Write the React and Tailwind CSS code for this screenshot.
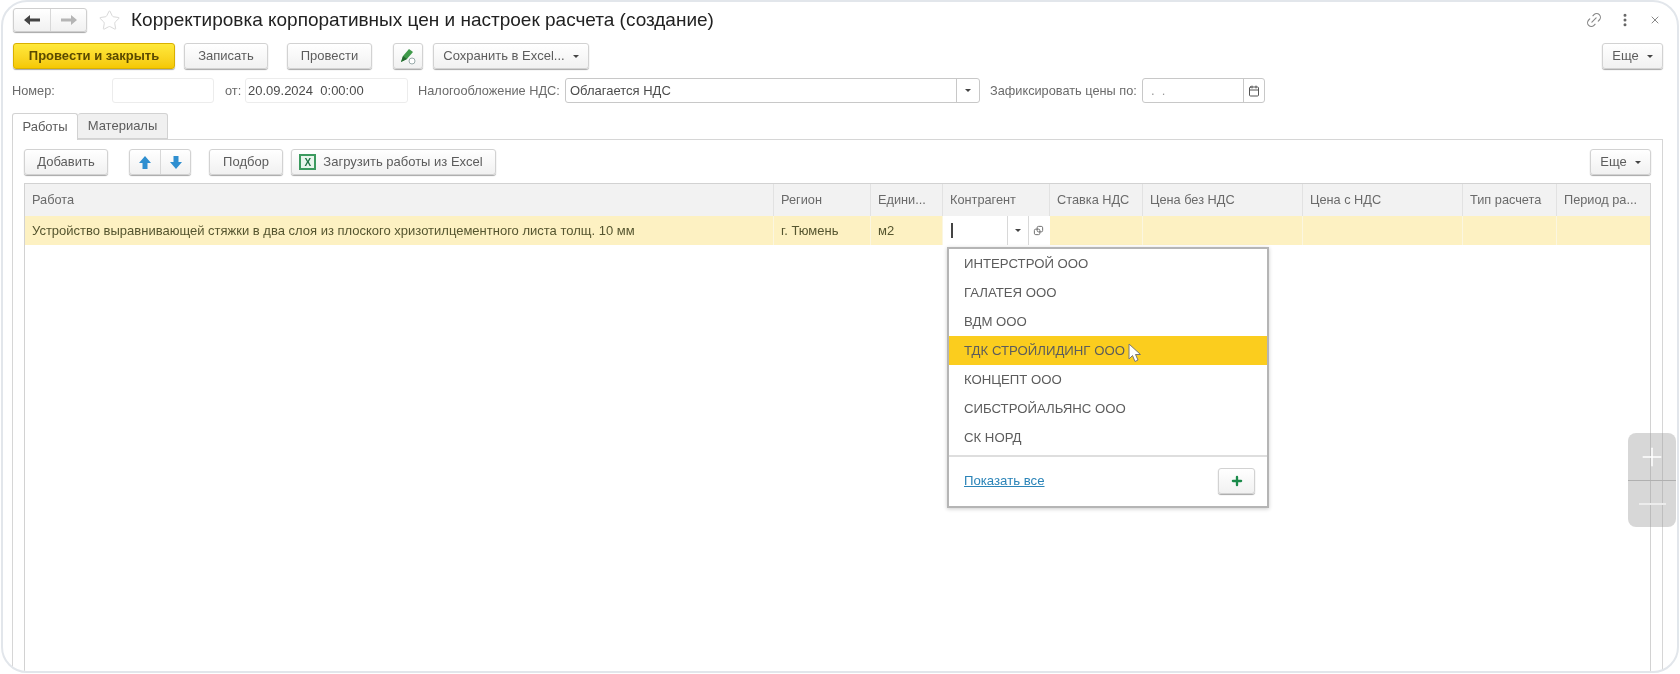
import React from 'react';
import { Star, X, EllipsisVertical, Link2, Calendar, Plus } from 'lucide-react';

const columns = ['Работа', 'Регион', 'Едини...', 'Контрагент', 'Ставка НДС', 'Цена без НДС', 'Цена с НДС', 'Тип расчета', 'Период ра...'];

const contractors = ['ИНТЕРСТРОЙ ООО', 'ГАЛАТЕЯ ООО', 'ВДМ ООО', 'ТДК СТРОЙЛИДИНГ ООО', 'КОНЦЕПТ ООО', 'СИБСТРОЙАЛЬЯНС ООО', 'СК НОРД'];

const Button = ({ className = '', children }) => (
  <div className={`h-[26px] flex items-center justify-center rounded-[3px] border border-[#d2d2d2] bg-gradient-to-b from-white to-[#f1f1f1] text-[13px] text-[#5c5c5c] shadow-[0_1px_1px_rgba(0,0,0,0.35)] ${className}`}>
    {children}
  </div>
);

const Caret = () => <span className="inline-block ml-2 border-x-[3px] border-t-[3px] border-x-transparent border-t-[#444]" />;

const Arrow = ({ flip, color }) => (
  <svg width="18" height="12" viewBox="0 0 18 12" className={flip ? 'rotate-180' : ''}>
    <path d="M1 6 L7 1 V4.5 H17 V7.5 H7 V11 Z" fill={color} />
  </svg>
);

const BlueArrow = ({ down }) => (
  <svg width="14" height="15" viewBox="0 0 14 15" className={down ? 'rotate-180' : ''}>
    <path d="M7 1 L13 8 H9.5 V14 H4.5 V8 H1 Z" fill="#2f8fd0" />
  </svg>
);

const Field = ({ className = '', children }) => (
  <div className={`h-[25px] flex items-center rounded-[3px] border border-[#ececec] bg-white text-[13px] text-[#4c4c4c] ${className}`}>
    {children}
  </div>
);

export default function App() {
  return (
    <div className="w-[1680px] h-[674px] bg-white overflow-hidden blur-[0.6px]" style={{ fontFamily: '"Liberation Sans", Arial, sans-serif' }}>
      <div className="relative mx-px w-[1678px] h-[673px] border-2 border-[#e2e6eb] rounded-[26px] overflow-hidden bg-white pl-[9px] pr-[14px] pt-[6px]">
        {/* Title row */}
        <div className="flex items-center h-[24px]">
          <div className="flex w-[74px] h-[24px] rounded-[3px] border border-[#cfcfcf] bg-gradient-to-b from-white to-[#f1f1f1] shadow-[0_1px_1px_rgba(0,0,0,0.35)] ml-px">
            <div className="w-[37px] flex items-center justify-center border-r border-[#d8d8d8]"><Arrow color="#444" /></div>
            <div className="flex-1 flex items-center justify-center"><Arrow flip color="#b5b5b5" /></div>
          </div>
          <Star size={23} strokeWidth={1} className="ml-[11px] text-[#d6d6d6]" />
          <h1 className="ml-[10px] text-[19px] text-[#222] font-normal">Корректировка корпоративных цен и настроек расчета (создание)</h1>
          <div className="ml-auto flex items-center text-[#888]">
            <Link2 size={18} strokeWidth={1.5} className="-rotate-45" />
            <EllipsisVertical size={16} strokeWidth={2.5} className="ml-[14px] text-[#666]" />
            <X size={12} strokeWidth={2} className="ml-[16px] mr-[2px]" />
          </div>
        </div>

        {/* Command bar */}
        <div className="flex items-center mt-[11px] ml-px">
          <Button className="w-[162px] !border-[#d9b000] !from-[#ffe93a] !to-[#f5c800] !text-[#5a4a00] font-bold">Провести и закрыть</Button>
          <Button className="w-[84px] ml-[9px]">Записать</Button>
          <Button className="w-[85px] ml-[19px]">Провести</Button>
          <Button className="w-[30px] ml-[21px]">
            <svg width="18" height="18" viewBox="0 0 18 18">
              <path d="M2 15 L4 9 L10 2 L14 5 L8 12 Z" fill="#3f9a4a" />
              <path d="M2 15 L4 9 L8 12 Z" fill="#256b30" />
              <circle cx="13" cy="14" r="3" fill="#fff" stroke="#9aa" strokeWidth="1" />
            </svg>
          </Button>
          <Button className="w-[156px] ml-[10px]">Сохранить в Excel...<Caret /></Button>
          <Button className="w-[61px] ml-auto">Еще<Caret /></Button>
        </div>

        {/* Header fields */}
        <div className="flex items-center mt-[9px] text-[12.75px] text-[#6a6a6a]">
          <span className="w-[100px]">Номер:</span>
          <Field className="w-[102px]" />
          <span className="ml-[11px] w-[20px]">от:</span>
          <Field className="w-[163px] pl-[2px]">20.09.2024&nbsp;&nbsp;0:00:00</Field>
          <span className="ml-[10px] w-[147px]">Налогообложение НДС:</span>
          <Field className="w-[415px] pl-[4px] !border-[#c8c8c8]">
            <span className="flex-1">Облагается НДС</span>
            <span className="w-[23px] h-full flex items-center justify-center border-l border-[#c8c8c8]">
              <span className="border-x-[3px] border-t-[3px] border-x-transparent border-t-[#444]" />
            </span>
          </Field>
          <span className="ml-[10px] w-[152px]">Зафиксировать цены по:</span>
          <Field className="w-[123px] pl-[8px] !border-[#c8c8c8] text-[#999]">
            <span className="flex-1">.&nbsp;&nbsp;.</span>
            <span className="w-[21px] h-full flex items-center justify-center border-l border-[#c8c8c8]">
              <Calendar size={12} strokeWidth={2} className="text-[#555]" />
            </span>
          </Field>
        </div>

        {/* Tabs */}
        <div className="flex mt-[10px] h-[27px] text-[13px] text-[#5c5c5c]">
          <div className="w-[66px] h-[27px] z-10 flex items-center justify-center bg-white border border-b-0 border-[#d2d2d2] rounded-t-[3px]">Работы</div>
          <div className="w-[90px] h-[26px] flex items-center justify-center bg-[#f0f0f0] border border-l-0 border-[#d2d2d2] rounded-t-[3px]">Материалы</div>
        </div>

        {/* Tab panel */}
        <div className="-mt-px h-[560px] border border-[#d6d6d6] px-[11px] pt-[9px]">
          <div className="flex items-center">
            <Button className="w-[84px]">Добавить</Button>
            <div className="ml-[21px] flex w-[62px] h-[26px] rounded-[3px] border border-[#d2d2d2] bg-gradient-to-b from-white to-[#f1f1f1] shadow-[0_1px_1px_rgba(0,0,0,0.35)]">
              <div className="w-[31px] flex items-center justify-center border-r border-[#d8d8d8]"><BlueArrow /></div>
              <div className="flex-1 flex items-center justify-center"><BlueArrow down /></div>
            </div>
            <Button className="w-[74px] ml-[18px]">Подбор</Button>
            <Button className="w-[205px] ml-[8px] pr-[5px]">
              <span className="mr-[7px] w-[17px] h-[16px] flex items-center justify-center border-2 border-[#3c9a5f] bg-[#e8f5ec] text-[10px] font-bold text-[#217346]">X</span>
              Загрузить работы из Excel
            </Button>
            <Button className="w-[61px] ml-auto">Еще<Caret /></Button>
          </div>

          {/* Table */}
          <div className="mt-[8px] h-[500px] border border-[#d2d2d2]">
            <div className="grid grid-cols-[749px_97px_72px_107px_93px_160px_160px_94px_93px] h-[32px] bg-[#f2f2f2] text-[12.75px] text-[#6a6a6a]">
              {columns.map((c) => (
                <div key={c} className="flex items-center pl-[7px] border-r border-[#e2e2e2] last:border-r-0 whitespace-nowrap overflow-hidden">{c}</div>
              ))}
            </div>
            <div className="grid grid-cols-[749px_97px_72px_107px_93px_160px_160px_94px_93px] h-[29px] bg-[#fdf1c2] text-[13px] text-[#55552f]">
              <div className="flex items-center pl-[7px] border-r border-[#fbf6e0] whitespace-nowrap">Устройство выравнивающей стяжки в два слоя из плоского хризотилцементного листа толщ. 10 мм</div>
              <div className="flex items-center pl-[7px] border-r border-[#fbf6e0]">г. Тюмень</div>
              <div className="flex items-center pl-[7px] border-r border-[#fbf6e0]">м2</div>
              <div className="relative flex items-center bg-white">
                <span className="ml-[8px] w-[2px] h-[15px] bg-[#444]" />
                <span className="ml-auto w-[21px] h-full flex items-center justify-center border-l border-[#d8d8d8]">
                  <span className="border-x-[3px] border-t-[3px] border-x-transparent border-t-[#444]" />
                </span>
                <span className="w-[22px] h-full flex items-center justify-center pr-[3px] border-l border-[#d8d8d8]">
                  <svg width="11" height="11" viewBox="0 0 12 12" fill="none" stroke="#666" strokeWidth="1">
                    <rect x="1.5" y="4.5" width="6" height="6" rx="1.5" />
                    <rect x="4.5" y="1.5" width="6" height="6" rx="1.5" />
                  </svg>
                </span>

                {/* Dropdown */}
                <div className="absolute z-20 left-[4px] top-[31px] w-[322px] h-[261px] bg-white border-2 border-[#b5b5b5] shadow-[0_1px_4px_rgba(0,0,0,0.2)] text-[13.2px] text-[#5c5c5c]">
                  {contractors.map((name, i) => (
                    <div key={name} className={`h-[29.1px] flex items-center pl-[15px] ${i === 3 ? 'bg-[#fbcd1e]' : ''}`}>{name}</div>
                  ))}
                  <div className="mt-[2px] border-t-2 border-[#dedede] flex items-center justify-between pl-[15px] pr-[12px] h-[50px]">
                    <span className="text-[13.2px] text-[#2b84b8] underline">Показать все</span>
                    <Button className="w-[37px] h-[25px]"><Plus size={14} strokeWidth={4} className="text-[#1a8a4a]" /></Button>
                  </div>
                  {/* Mouse pointer */}
                  <svg width="14" height="20" viewBox="0 0 14 20" className="absolute left-[179px] top-[94px]">
                    <path d="M1 1 V16 L4.5 12.5 L7 18.5 L10 17 L7.5 11.5 H12.5 Z" fill="#fff" stroke="#777" strokeWidth="1" />
                  </svg>
                </div>
              </div>
              <div className="border-r border-[#fbf6e0]" />
              <div className="border-r border-[#fbf6e0]" />
              <div className="border-r border-[#fbf6e0]" />
              <div className="border-r border-[#fbf6e0]" />
              <div />
            </div>
          </div>
        </div>

        {/* Zoom overlay */}
        <div className="absolute z-30 left-[1625px] top-[431px] w-[48px] h-[94px] rounded-[8px] bg-[#9a9a9a]/40 flex flex-col">
          <div className="h-[48px] flex items-center justify-center border-b border-[#b0b0b0]">
            <Plus size={30} strokeWidth={1.2} className="text-white" />
          </div>
          <div className="flex-1 flex items-center justify-center">
            <span className="w-[27px] h-[2px] bg-[#ececec]" />
          </div>
        </div>
      </div>
    </div>
  );
}
